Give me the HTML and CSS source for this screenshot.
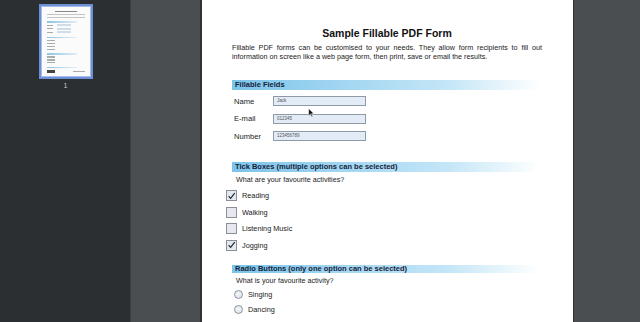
FILE: index.html
```html
<!DOCTYPE html>
<html>
<head>
<meta charset="utf-8">
<link rel="stylesheet" href="styles.css">
</head>
<body>
<div class="app">
  <aside class="thumbs">
    <div class="thumb">
      <div class="thumb-page">
        <div class="t-title"></div>
        <div class="t-line"></div>
        <div class="t-line"></div>
        <div class="t-bar"></div>
        <div class="t-row"><span class="t-lab"></span><span class="t-box"></span></div>
        <div class="t-row"><span class="t-lab"></span><span class="t-box"></span></div>
        <div class="t-row"><span class="t-lab"></span><span class="t-box"></span></div>
        <div class="t-bar"></div>
        <div class="t-item"></div>
        <div class="t-item"></div>
        <div class="t-item"></div>
        <div class="t-item"></div>
        <div class="t-bar"></div>
        <div class="t-item"></div>
        <div class="t-item"></div>
        <div class="t-item"></div>
        <div class="t-bar"></div>
        <div class="t-foot"><span class="t-logo"></span><span class="t-url"></span></div>
      </div>
    </div>
    <div class="thumb-num">1</div>
  </aside>
  <main class="viewer">
    <div class="page">
      <h1 class="title">Sample Fillable PDF Form</h1>
      <p class="intro">Fillable PDF forms can be customised to your needs. They allow form recipients to fill out information on screen like a web page form, then print, save or email the results.</p>

      <div class="section-bar">Fillable Fields</div>
      <div class="fields">
        <div class="field"><span class="flabel">Name</span><span class="finput">Jack</span></div>
        <div class="field"><span class="flabel">E-mail</span><span class="finput">012345</span></div>
        <div class="field"><span class="flabel">Number</span><span class="finput">123456789</span></div>
      </div>

      <div class="section-bar bar-tick">Tick Boxes (multiple options can be selected)</div>
      <div class="question">What are your favourite activities?</div>
      <div class="checks">
        <div class="check"><span class="cbox"><svg viewBox="0 0 10 10" width="10" height="10"><path d="M1.8 5.2 L4 7.6 L8.6 1.8" fill="none" stroke="#1e2530" stroke-width="1.3"/></svg></span>Reading</div>
        <div class="check"><span class="cbox"></span>Walking</div>
        <div class="check"><span class="cbox"></span>Listening Music</div>
        <div class="check"><span class="cbox"><svg viewBox="0 0 10 10" width="10" height="10"><path d="M1.8 5.2 L4 7.6 L8.6 1.8" fill="none" stroke="#1e2530" stroke-width="1.3"/></svg></span>Jogging</div>
      </div>

      <div class="section-bar bar-radio">Radio Buttons (only one option can be selected)</div>
      <div class="question q-radio">What is your favourite activity?</div>
      <div class="radios">
        <div class="radio"><span class="rcircle"></span>Singing</div>
        <div class="radio"><span class="rcircle"></span>Dancing</div>
      </div>

      <svg class="cursor" viewBox="0 0 8 12" width="7" height="10"><path d="M0.5 0.5 L0.5 9.5 L2.7 7.4 L4.2 10.8 L5.6 10.2 L4.1 6.9 L7 6.9 Z" fill="#111" stroke="#fff" stroke-width="0.7"/></svg>
    </div>
  </main>
</div>
</body>
</html>
```

FILE: styles.css
```css
* { box-sizing: border-box; }
html, body { margin: 0; padding: 0; }
body {
  width: 640px;
  height: 322px;
  overflow: hidden;
  font-family: "Liberation Sans", Arial, sans-serif;
  background: #4a4e51;
}
.app {
  display: flex;
  height: 322px;
}
.thumbs {
  width: 131px;
  flex: none;
  background: #2b2f32;
  border-right: 1px solid #3a3e41;
  display: flex;
  flex-direction: column;
  align-items: center;
  padding-top: 4px;
  padding-left: 1px;
}
.thumb {
  width: 54px;
  height: 75px;
  border: 2px solid #6d8fd8;
  background: #a9bde9;
  padding: 1px;
}
.thumb-page {
  width: 100%;
  height: 100%;
  background: #fbfbfb;
  padding: 4px 5px 3px 5px;
  display: flex;
  flex-direction: column;
  gap: 1.6px;
}
.t-title { width: 22px; height: 1px; background: #888; margin: 0 auto 1px; }
.t-line { width: 100%; height: 1px; background: #c4c4c4; }
.t-bar { width: 80%; height: 1.5px; background: linear-gradient(90deg, #8fc3e2, #e2eff7); margin-top: 2px; }
.t-row { display: flex; gap: 4px; height: 2px; align-items: center; }
.t-lab { width: 6px; height: 1px; background: #a8a8a8; }
.t-box { width: 14px; height: 2px; background: #d0dbec; }
.t-item { width: 8px; height: 1.5px; background: #a8aeb0; }
.t-foot { margin-top: auto; display: flex; justify-content: space-between; align-items: center; }
.t-logo { width: 8px; height: 3px; background: #444; }
.t-url { width: 12px; height: 1px; background: #aaa; }
.thumb-num {
  margin-top: 2px;
  color: #c8c8c8;
  font-size: 7px;
  line-height: 9px;
}
.viewer {
  flex: 1;
  background: #4a4e51;
  padding-left: 69px;
  display: flex;
}
.page {
  position: relative;
  width: 374px;
  height: 322px;
  background: #fff;
  border-left: 2px solid #2f3234;
  border-right: 1px solid #2f3234;
  padding: 27px 31px 0 30px;
  color: #1b1b1b;
}
.title {
  margin: 0;
  font-size: 10.5px;
  line-height: 12px;
  font-weight: bold;
  text-align: center;
  color: #111;
}
.intro {
  margin: 4px 0 0 0;
  font-size: 7.2px;
  line-height: 9px;
  text-align: justify;
  color: #1a1a1a;
}
.section-bar {
  margin-top: 19px;
  height: 10px;
  width: 308px;
  background: linear-gradient(90deg, #7cc4ea 0%, #a6d8f2 40%, #c4e6f7 70%, rgba(255,255,255,0) 100%);
  color: #15223a;
  font-weight: bold;
  font-size: 7.5px;
  line-height: 10px;
  padding-left: 3px;
}
.fields {
  margin-top: 6px;
  display: flex;
  flex-direction: column;
  gap: 7.5px;
}
.field {
  display: flex;
  align-items: center;
  height: 10px;
}
.flabel {
  width: 41px;
  padding-left: 2px;
  font-size: 7.6px;
  color: #1a1a1a;
}
.finput {
  width: 93px;
  height: 10px;
  background: #e3ebf7;
  border: 1px solid #8e9aa8;
  font-size: 4.5px;
  line-height: 8px;
  padding-left: 3px;
  color: #555;
}
.bar-tick { margin-top: 21px; }
.question {
  margin-top: 3px;
  padding-left: 4px;
  font-size: 7.2px;
  line-height: 10px;
  color: #1a1a1a;
}
.checks {
  margin-top: 5px;
  display: flex;
  flex-direction: column;
  gap: 5.5px;
}
.check {
  display: flex;
  align-items: center;
  gap: 5px;
  height: 11px;
  font-size: 7.3px;
  color: #1a1a1a;
  margin-left: -6px;
}
.cbox {
  width: 11px;
  height: 11px;
  border: 1px solid #8a8f98;
  background: #e6e8ef;
  display: flex;
  align-items: center;
  justify-content: center;
}
.bar-radio { margin-top: 14px; height: 8px; line-height: 8px; }
.q-radio { margin-top: 3px; }
.radios {
  margin-top: 4px;
  display: flex;
  flex-direction: column;
  gap: 5px;
}
.radio {
  display: flex;
  align-items: center;
  gap: 5px;
  height: 10px;
  font-size: 7.3px;
  color: #1a1a1a;
  padding-left: 2px;
}
.rcircle {
  width: 9px;
  height: 9px;
  border-radius: 50%;
  border: 1px solid #8b93a0;
  background: radial-gradient(circle at 45% 40%, #f4f6fa 0%, #d9dee8 100%);
}
.cursor {
  position: absolute;
  left: 106px;
  top: 108px;
}
```
